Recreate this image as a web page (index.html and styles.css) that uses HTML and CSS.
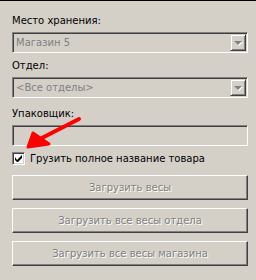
FILE: index.html
```html
<!DOCTYPE html>
<html lang="ru">

<head>
    <meta charset="UTF-8">
    <title>Загрузка весов</title>
    <link rel="stylesheet" href="styles.css">
</head>

<body>
    <div class="panel">
        <div class="field-label">Место хранения:</div>
        <div class="combo">
            <span class="combo-text">Магазин 5</span>
            <span class="combo-btn"><span class="arrow"></span></span>
        </div>

        <div class="field-label">Отдел:</div>
        <div class="combo combo-last">
            <span class="combo-text">&lt;Все отделы&gt;</span>
            <span class="combo-btn"><span class="arrow"></span></span>
        </div>

        <div class="field-label">Упаковщик:</div>
        <div class="edit"></div>

        <label class="check-row">
            <span class="checkbox">
                <svg width="9" height="9" viewBox="0 0 9 9">
                    <path d="M1 3v3l2 2h1l4-4V1L3 6z" fill="#000"/>
                </svg>
            </span>
            <span>Грузить полное название товара</span>
        </label>

        <div class="buttons">
            <button class="btn" disabled>Загрузить весы</button>
            <button class="btn" disabled>Загрузить все весы отдела</button>
            <button class="btn" disabled>Загрузить все весы магазина</button>
        </div>

        <svg class="pointer" width="90" height="50" viewBox="0 0 90 50">
            <path d="M79 4 L36 26" stroke="#f00" stroke-width="4" stroke-linecap="round" fill="none"/>
            <path d="M28 32 L33 18 L49 29 Z" fill="#f00" stroke="#f00" stroke-width="3" stroke-linejoin="round"/>
        </svg>
    </div>
</body>

</html>
```

FILE: styles.css
```css
body {
    margin: 0;
    background-color: #d4d0c8;
    font-family: "DejaVu Sans", Verdana, sans-serif;
    font-size: 10px;
    color: #000000;
}

.panel {
    position: relative;
    height: 279px;
    border-top: 1px solid #000000;
    padding: 13px 9px 0 12px;
    display: flex;
    flex-direction: column;
}

.field-label {
    height: 13px;
    line-height: 13px;
    margin-bottom: 5px;
}

.combo {
    width: 236px;
    height: 21px;
    box-sizing: border-box;
    display: flex;
    align-items: center;
    background-color: #d4d0c8;
    border: 1px solid;
    border-color: #808080 #ffffff #ffffff #808080;
    box-shadow: inset 1px 1px #404040, inset -1px -1px #d4d0c8;
    margin-bottom: 6px;
}

.combo-last {
    margin-bottom: 9px;
}

.combo-text {
    flex: 1;
    padding-left: 3px;
    color: #808080;
}

.combo-btn {
    width: 16px;
    height: 17px;
    box-sizing: border-box;
    margin-right: 1px;
    border: 1px solid;
    border-color: #d4d0c8 #404040 #404040 #d4d0c8;
    box-shadow: inset 1px 1px #ffffff, inset -1px -1px #808080;
    display: flex;
    align-items: center;
    justify-content: center;
}

.arrow {
    width: 0;
    height: 0;
    border-left: 4px solid transparent;
    border-right: 4px solid transparent;
    border-top: 4px solid #808080;
    filter: drop-shadow(1px 1px 0 #ffffff);
}

.edit {
    width: 236px;
    height: 21px;
    box-sizing: border-box;
    border: 1px solid;
    border-color: #808080 #ffffff #ffffff #808080;
    box-shadow: inset 1px 1px #404040, inset -1px -1px #d4d0c8;
    margin-bottom: 6px;
}

.check-row {
    display: flex;
    align-items: center;
    gap: 5px;
    height: 13px;
}

.checkbox {
    width: 13px;
    height: 13px;
    box-sizing: border-box;
    background-color: #ffffff;
    border: 1px solid;
    border-color: #808080 #ffffff #ffffff #808080;
    box-shadow: inset 1px 1px #404040, inset -1px -1px #d4d0c8;
    display: flex;
    align-items: center;
    justify-content: center;
}

.buttons {
    display: flex;
    flex-direction: column;
    gap: 8px;
    margin-top: 10px;
}

.btn {
    width: 236px;
    height: 25px;
    box-sizing: border-box;
    background-color: #d4d0c8;
    border: 1px solid;
    border-color: #ffffff #404040 #404040 #ffffff;
    box-shadow: inset -1px -1px #808080;
    font-family: "DejaVu Sans", Verdana, sans-serif;
    font-size: 10px;
    color: #808080;
    text-shadow: 1px 1px #ffffff;
    padding: 0;
}

.pointer {
    position: absolute;
    left: 0;
    top: 114px;
}
```
